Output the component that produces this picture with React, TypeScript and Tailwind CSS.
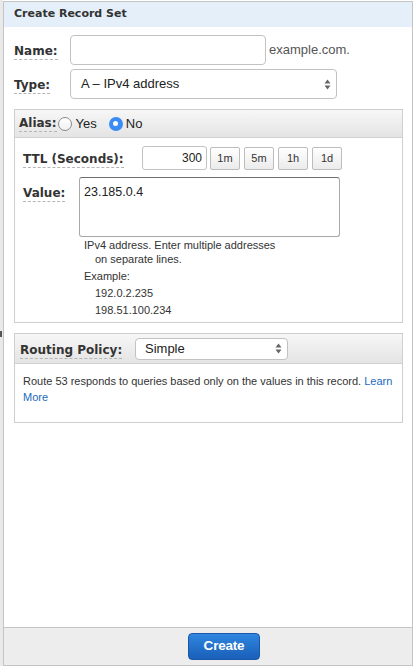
import React from "react";

const Label = ({ children, className = "" }: { children: React.ReactNode; className?: string }) => (
  <span
    className={
      "inline-block font-['DejaVu_Sans',Verdana,sans-serif] font-bold text-[12px] leading-[14px] text-[#333] border-b border-dashed border-[#b5b5b5] pb-[1px] " +
      className
    }
  >
    {children}
  </span>
);

const Arrows = () => (
  <svg width="7" height="11" viewBox="0 0 7 11" className="shrink-0">
    <path d="M3.5 0.5 L6.5 4.5 L0.5 4.5 Z" fill="#666" />
    <path d="M3.5 10.5 L6.5 6.5 L0.5 6.5 Z" fill="#666" />
  </svg>
);

const TtlBtn = ({ children }: { children: React.ReactNode }) => (
  <div className="w-[30px] h-[23px] flex items-center justify-center border border-[#bdbdbd] rounded-[2px] bg-gradient-to-b from-[#ffffff] to-[#ebebeb] text-[11px] text-[#333]">
    {children}
  </div>
);

export default function App() {
  return (
    <div className="w-[415px] h-[668px] bg-white flex items-start font-['Liberation_Sans',Arial,sans-serif] text-[#333]">
      {/* left strip */}
      <div className="w-[3px] h-[666px] bg-[#e9e9e9] flex flex-col">
        <div className="h-[331px]" />
        <div className="h-[6px] w-[2px] bg-[#555]" />
      </div>
      {/* panel */}
      <div className="mt-[1px] w-[410px] h-[665px] border border-[#c4c4c4] flex flex-col">
        <div className="h-[25px] bg-[#e5eff9] flex items-center pl-[10px]">
          <span className="font-['DejaVu_Sans',Verdana,sans-serif] font-bold text-[11px] text-[#333]">
            Create Record Set
          </span>
        </div>
        <div className="flex-1 bg-white px-[10px] pt-[8px] flex flex-col">
          {/* Name */}
          <div className="flex items-center h-[30px]">
            <div className="w-[56px]">
              <Label>Name:</Label>
            </div>
            <div className="w-[196px] h-[30px] border border-[#c2c2c2] rounded-[4px] bg-white" />
            <span className="ml-[3px] text-[13px] text-[#555]">example.com.</span>
          </div>
          {/* Type */}
          <div className="flex items-center h-[30px] mt-[4px]">
            <div className="w-[56px]">
              <Label>Type:</Label>
            </div>
            <div className="w-[267px] h-[30px] border border-[#c2c2c2] rounded-[4px] bg-white flex items-center pl-[10px] pr-[5px]">
              <span className="flex-1 text-[13px] text-[#222]">A – IPv4 address</span>
              <Arrows />
            </div>
          </div>

          {/* Alias box */}
          <div className="mt-[10px] w-[389px] border border-[#cfcfcf] flex flex-col">
            <div className="h-[28px] bg-gradient-to-b from-[#f7f7f7] to-[#e4e4e4] border-b border-[#d0d0d0] flex items-center pl-[4px]">
              <Label>Alias:</Label>
              <span className="ml-[1px] w-[14px] h-[14px] rounded-full border border-[#8a8a8a] bg-gradient-to-b from-white to-[#f0f0f0]" />
              <span className="ml-[4px] text-[13px] text-[#222]">Yes</span>
              <span className="ml-[12px] w-[14px] h-[14px] rounded-full bg-[#3b8cf5] flex items-center justify-center">
                <span className="w-[5px] h-[5px] rounded-full bg-white" />
              </span>
              <span className="ml-[3px] text-[13px] text-[#222]">No</span>
            </div>
            <div className="px-[8px] pt-[8px] pb-[3px] flex flex-col">
              <div className="flex items-center h-[24px]">
                <div className="w-[119px]">
                  <Label>TTL (Seconds):</Label>
                </div>
                <div className="w-[65px] h-[24px] border border-[#c2c2c2] rounded-[3px] bg-white flex items-center justify-end pr-[4px] text-[12px] text-[#222]">
                  300
                </div>
                <div className="flex gap-[4px] ml-[3px]">
                  <TtlBtn>1m</TtlBtn>
                  <TtlBtn>5m</TtlBtn>
                  <TtlBtn>1h</TtlBtn>
                  <TtlBtn>1d</TtlBtn>
                </div>
              </div>
              <div className="flex mt-[7px]">
                <div className="w-[56px] pt-[3px]">
                  <Label>Value:</Label>
                </div>
                <div className="flex flex-col">
                  <div className="w-[261px] h-[60px] border border-[#a8a8a8] border-t-[#6e6e6e] rounded-[3px] bg-white pl-[4px] pt-[7px] text-[12.5px] text-[#222] leading-[15px]">
                    23.185.0.4
                  </div>
                  <div className="pl-[5px] pt-[1px] text-[11px] text-[#333]">
                    <div className="leading-[14px]">IPv4 address. Enter multiple addresses</div>
                    <div className="leading-[14px] pl-[11px]">on separate lines.</div>
                    <div className="leading-[17px] mt-[2px]">Example:</div>
                    <div className="leading-[17px] pl-[11px]">192.0.2.235</div>
                    <div className="leading-[17px] pl-[11px]">198.51.100.234</div>
                  </div>
                </div>
              </div>
            </div>
          </div>

          {/* Routing box */}
          <div className="mt-[10px] w-[389px] border border-[#cfcfcf] flex flex-col">
            <div className="h-[30px] bg-gradient-to-b from-[#f7f7f7] to-[#e4e4e4] border-b border-[#d0d0d0] flex items-center pl-[5px]">
              <div className="w-[115px]">
                <Label>Routing Policy:</Label>
              </div>
              <div className="w-[153px] h-[22px] border border-[#c2c2c2] rounded-[4px] bg-white flex items-center pl-[9px] pr-[5px]">
                <span className="flex-1 text-[13px] text-[#222]">Simple</span>
                <Arrows />
              </div>
            </div>
            <div className="px-[8px] pt-[9px] pb-[17px] text-[11px] leading-[16px] text-[#333]">
              <div>
                Route 53 responds to queries based only on the values in this record.{" "}
                <span className="text-[#1a6bbd]">Learn</span>
              </div>
              <div className="text-[#1a6bbd]">More</div>
            </div>
          </div>
        </div>
        {/* footer */}
        <div className="h-[38px] bg-[#ededed] border-t border-[#c4c4c4] flex items-start pt-[5px] pl-[184px]">
          <div className="w-[72px] h-[27px] rounded-[4px] bg-gradient-to-b from-[#2f86df] to-[#1a5fb8] border border-[#1a57a8] flex items-center justify-center text-white font-bold text-[13.5px] tracking-[-0.2px]">
            Create
          </div>
        </div>
      </div>
    </div>
  );
}
